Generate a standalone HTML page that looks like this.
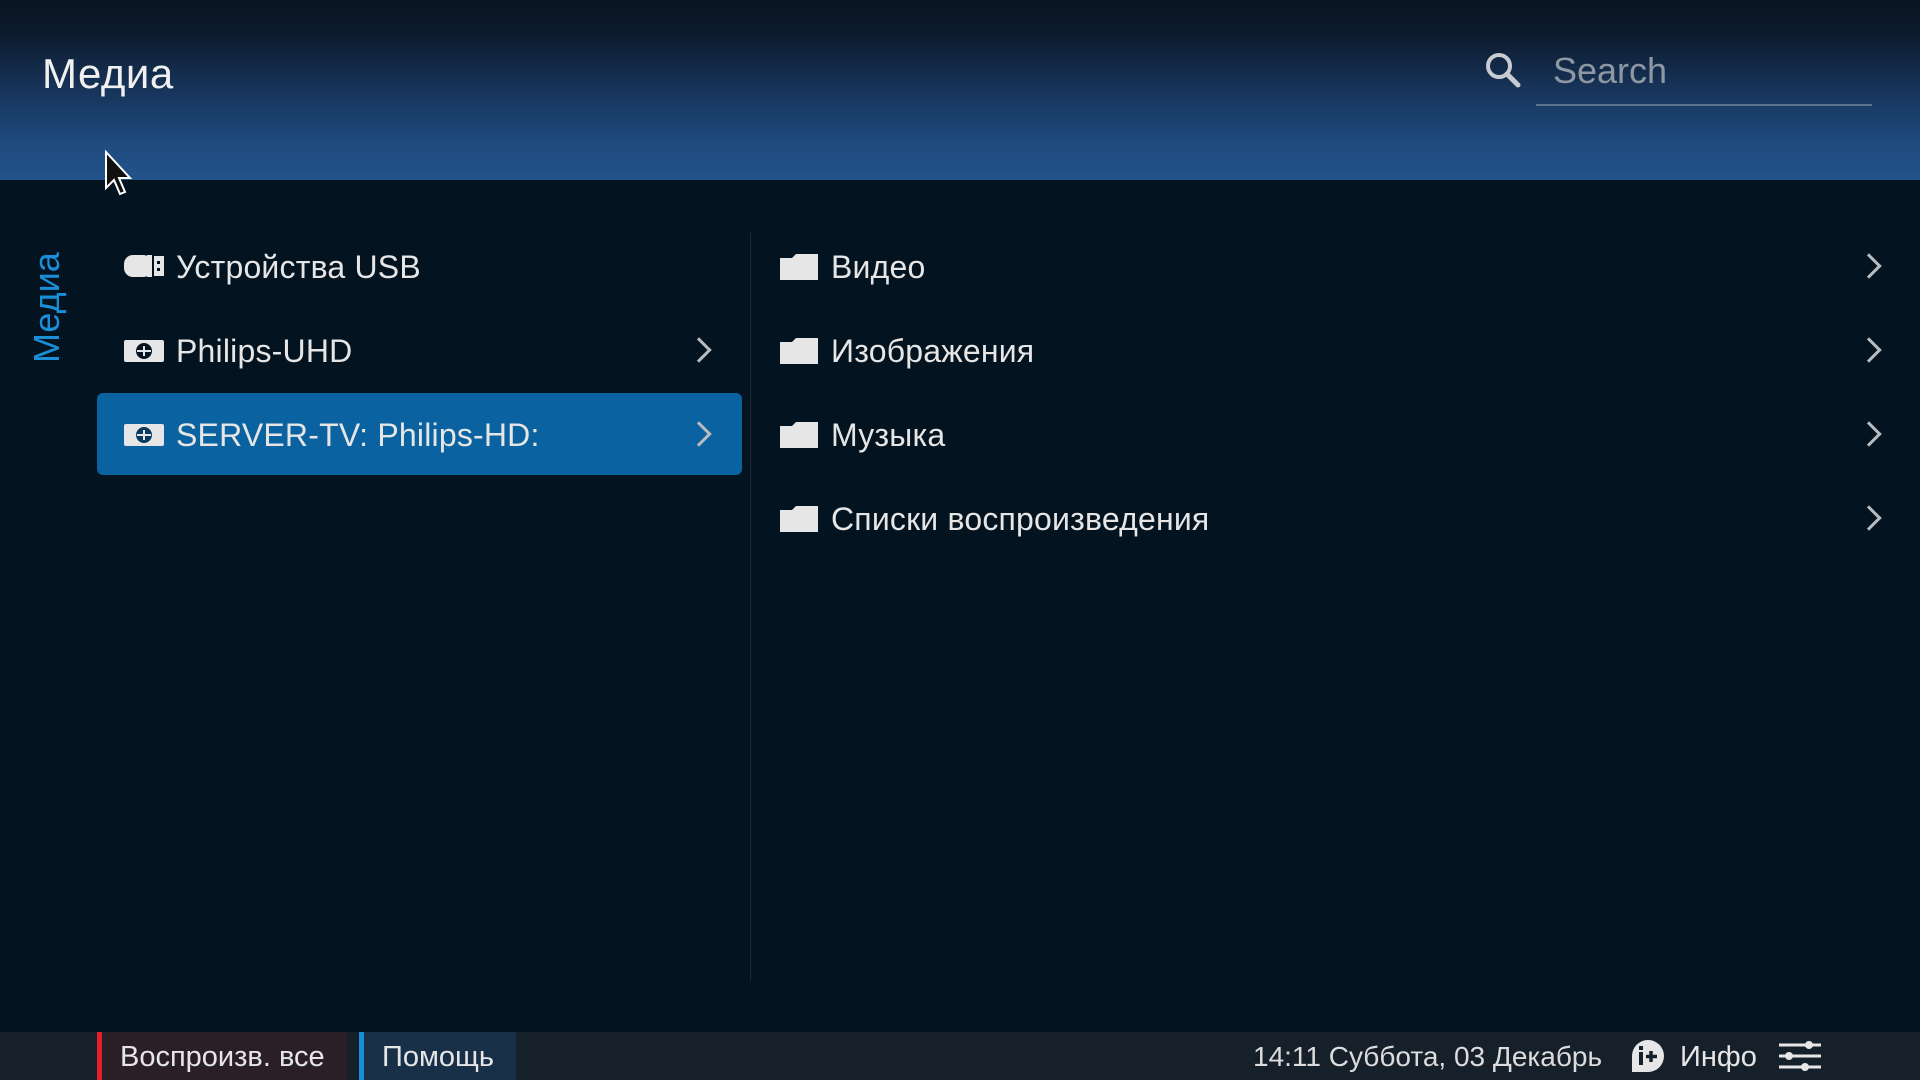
<!DOCTYPE html>
<html><head><meta charset="utf-8"><style>
*{margin:0;padding:0;box-sizing:border-box}
body{width:1920px;height:1080px;background:#041320;font-family:"Liberation Sans","DejaVu Sans",sans-serif;color:#e6e6e6;position:relative;overflow:hidden}
.hdr{position:absolute;left:0;top:0;width:1920px;height:180px;background:linear-gradient(#0a1420 0%,#0c1a2c 18%,#17345a 50%,#1f4b7f 80%,#22538a 100%)}
.a{position:absolute;white-space:nowrap}
.t{font-size:32px;line-height:40px;letter-spacing:0.2px}
.sel{position:absolute;left:97px;top:393px;width:645px;height:82px;background:#0a62a0;border-radius:6px}
.chev{position:absolute;width:18px;height:18px;border-right:3px solid #b8bcc0;border-top:3px solid #b8bcc0;transform:rotate(45deg)}
.bar{position:absolute;left:0;top:1032px;width:1920px;height:48px;background:#16202a}
</style></head><body>
<div class="hdr"></div>
<div class="a" style="left:42px;top:50px;font-size:42px;color:#f0f0f0;letter-spacing:0.5px">Медиа</div>
<svg class="a" style="left:1483px;top:50px" width="40" height="40" viewBox="0 0 40 40"><circle cx="16" cy="16" r="11" fill="none" stroke="#c8ccd0" stroke-width="4"/><line x1="24" y1="24" x2="35" y2="35" stroke="#c8ccd0" stroke-width="5" stroke-linecap="round"/></svg>
<div class="a" style="left:1553px;top:50px;font-size:36px;color:#8d98a4">Search</div>
<div class="a" style="left:1536px;top:104px;width:336px;height:2px;background:#5a7190"></div>
<svg class="a" style="left:104px;top:150px" width="32" height="50" viewBox="0 0 32 50"><path d="M2 2 L2 38 L10 30 L16 44 L21 42 L15 28 L26 28 Z" fill="#111" stroke="#fff" stroke-width="2"/></svg>
<div class="a" style="left:2px;top:297px;transform:rotate(-90deg);font-size:36px;color:#1a8fd8;width:90px;text-align:center">Медиа</div>
<div class="sel"></div>
<svg class="a" style="left:124px;top:255px" width="40" height="22"><rect x="0" y="0" width="28" height="22" rx="9" fill="#e6e6e6"/><rect x="23" y="0" width="5" height="22" fill="#e6e6e6"/><rect x="30" y="1" width="10" height="20" fill="#e6e6e6"/><rect x="33" y="6" width="3" height="3" fill="#041320"/><rect x="33" y="13" width="3" height="3" fill="#041320"/></svg>
<div class="a t" style="left:176px;top:247px">Устройства USB</div>
<svg class="a" style="left:124px;top:340px" width="40" height="22"><rect width="40" height="22" rx="2" fill="#e6e6e6"/><circle cx="20" cy="11" r="8" fill="#041320"/><path d="M13 11h14M20 6v10" stroke="#e6e6e6" stroke-width="2"/></svg>
<div class="a t" style="left:176px;top:331px">Philips-UHD</div>
<div class="chev" style="left:690px;top:341px"></div>
<svg class="a" style="left:124px;top:424px" width="40" height="22"><rect width="40" height="22" rx="2" fill="#e6e6e6"/><circle cx="20" cy="11" r="8" fill="#0a3a60"/><path d="M13 11h14M20 6v10" stroke="#e6e6e6" stroke-width="2"/></svg>
<div class="a t" style="left:176px;top:415px">SERVER-TV: Philips-HD:</div>
<div class="chev" style="left:690px;top:425px"></div>
<div class="a" style="left:750px;top:233px;width:1px;height:747px;background:#1c2a38"></div>
<svg class="a" style="left:780px;top:254px" width="38" height="26"><path d="M0 4h12l4-4h22v26H0z" fill="#e6e6e6"/></svg>
<div class="a t" style="left:831px;top:247px">Видео</div>
<div class="chev" style="left:1860px;top:257px"></div>
<svg class="a" style="left:780px;top:338px" width="38" height="26"><path d="M0 4h12l4-4h22v26H0z" fill="#e6e6e6"/></svg>
<div class="a t" style="left:831px;top:331px">Изображения</div>
<div class="chev" style="left:1860px;top:341px"></div>
<svg class="a" style="left:780px;top:422px" width="38" height="26"><path d="M0 4h12l4-4h22v26H0z" fill="#e6e6e6"/></svg>
<div class="a t" style="left:831px;top:415px">Музыка</div>
<div class="chev" style="left:1860px;top:425px"></div>
<svg class="a" style="left:780px;top:506px" width="38" height="26"><path d="M0 4h12l4-4h22v26H0z" fill="#e6e6e6"/></svg>
<div class="a t" style="left:831px;top:499px">Списки воспроизведения</div>
<div class="chev" style="left:1860px;top:509px"></div>
<div class="bar"></div>
<div class="a" style="left:97px;top:1032px;width:250px;height:48px;background:#2a1f26;border-left:5px solid #e0202a"></div>
<div class="a" style="left:120px;top:1041px;font-size:29px">Воспроизв. все</div>
<div class="a" style="left:359px;top:1032px;width:157px;height:48px;background:#173047;border-left:5px solid #1a8fd8"></div>
<div class="a" style="left:382px;top:1041px;font-size:29px">Помощь</div>
<div class="a" style="left:1253px;top:1041px;font-size:28px;color:#dcdcdc">14:11 Суббота, 03 Декабрь</div>
<svg class="a" style="left:1632px;top:1040px" width="32" height="32"><path d="M16 0a16 16 0 1 1 0 32H0V16A16 16 0 0 1 16 0z" fill="#e6e6e6"/><rect x="7" y="12" width="4" height="13" fill="#16202a"/><rect x="7" y="6" width="4" height="4" fill="#16202a"/><path d="M19 11v11M14 16.5h11" stroke="#16202a" stroke-width="3.5"/></svg>
<div class="a" style="left:1680px;top:1041px;font-size:29px">Инфо</div>
<svg class="a" style="left:1779px;top:1040px" width="42" height="32"><path d="M0 5h42M0 16h42M0 27h42" stroke="#e6e6e6" stroke-width="3"/><circle cx="30" cy="5" r="4" fill="#e6e6e6"/><circle cx="10" cy="16" r="4" fill="#e6e6e6"/><circle cx="26" cy="27" r="4" fill="#e6e6e6"/></svg>
</body></html>
